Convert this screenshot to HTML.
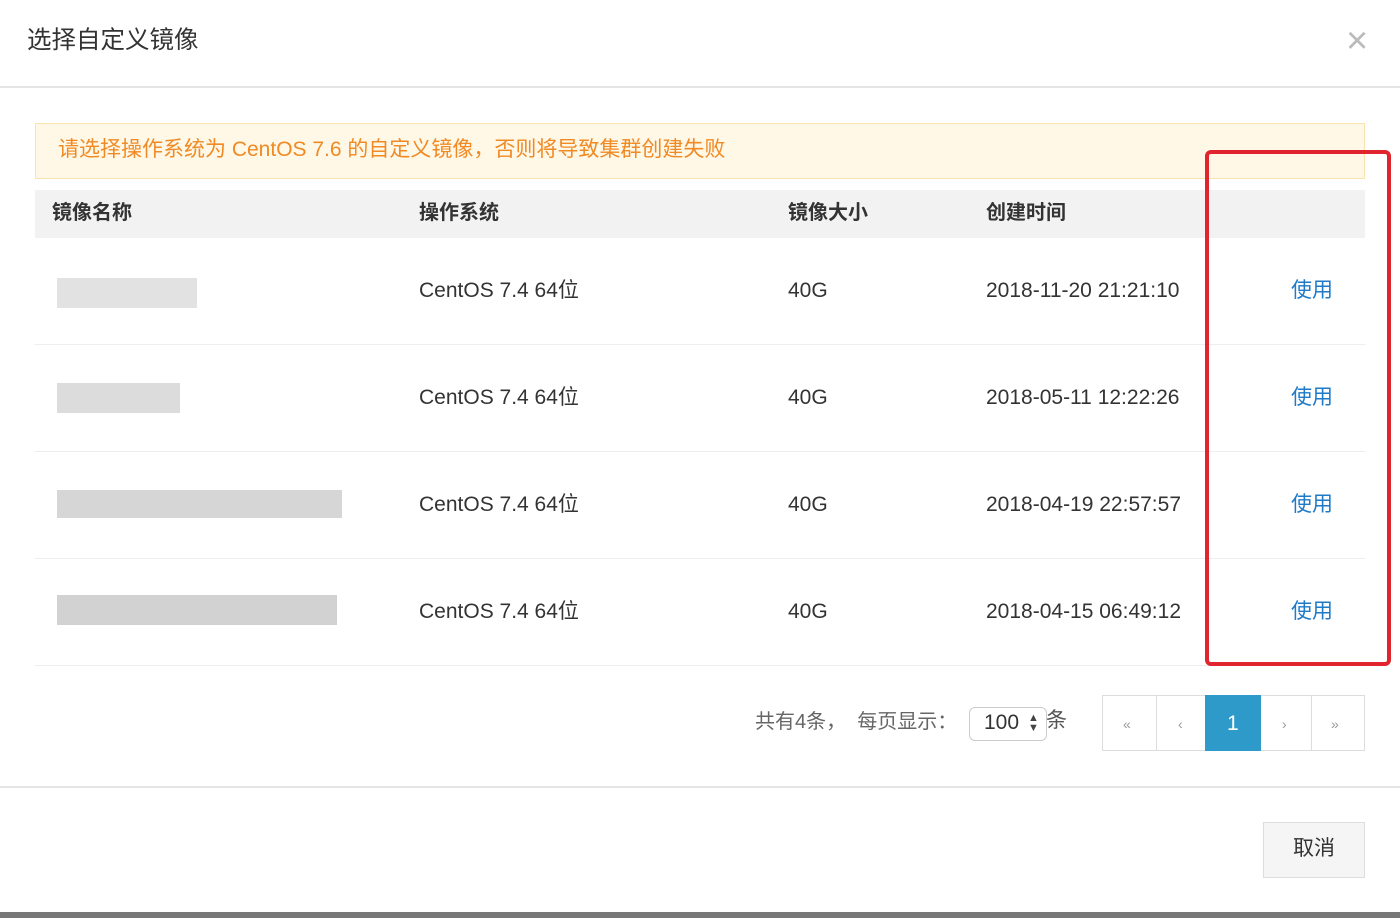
<!DOCTYPE html><html><head><meta charset="utf-8"><style>
body{margin:0;width:1400px;height:918px;background:#fff;position:relative;overflow:hidden;font-family:"Liberation Sans","Noto Sans CJK SC",sans-serif;color:#333}
.a{position:absolute}
.t{font-size:21px;white-space:nowrap;line-height:24px}
.blur{position:absolute;background:#ddd}
</style></head><body>
<div class="a" style="left:27px;top:27px;font-size:24.5px;line-height:28px;color:#333">选择自定义镜像</div>
<div class="a" style="left:1346px;top:22px;font-size:38px;color:#bbb;line-height:38px">×</div>
<div class="a" style="left:0;top:86px;width:1400px;height:2px;background:#e5e5e5"></div>
<div class="a" style="left:35px;top:123px;width:1328px;height:54px;background:#fff8e6;border:1px solid #fbe3b0"></div>
<div class="a t" style="left:58px;top:138px;color:#f08a24">请选择操作系统为 CentOS 7.6 的自定义镜像，否则将导致集群创建失败</div>
<div class="a" style="left:35px;top:190px;width:1330px;height:48px;background:#f2f2f2"></div>
<div class="a t" style="left:52px;top:201px;font-weight:bold;font-size:20px">镜像名称</div>
<div class="a t" style="left:419px;top:201px;font-weight:bold;font-size:20px">操作系统</div>
<div class="a t" style="left:788px;top:201px;font-weight:bold;font-size:20px">镜像大小</div>
<div class="a t" style="left:986px;top:201px;font-weight:bold;font-size:20px">创建时间</div>

<div class="a" style="left:35px;top:344px;width:1330px;height:1px;background:#eee"></div>
<div class="a" style="left:35px;top:451px;width:1330px;height:1px;background:#eee"></div>
<div class="a" style="left:35px;top:558px;width:1330px;height:1px;background:#eee"></div>
<div class="a" style="left:35px;top:665px;width:1330px;height:1px;background:#eee"></div>

<div class="blur" style="left:57px;top:278px;width:140px;height:30px;background:#e2e2e2"></div>
<div class="blur" style="left:57px;top:383px;width:123px;height:30px;background:#dcdcdc"></div>
<div class="blur" style="left:57px;top:490px;width:285px;height:28px;background:#d6d6d6"></div>
<div class="blur" style="left:57px;top:595px;width:280px;height:30px;background:#d2d2d2"></div>

<div class="a t" style="left:419px;top:279px">CentOS 7.4 64位</div>
<div class="a t" style="left:788px;top:279px">40G</div>
<div class="a t" style="left:986px;top:279px">2018-11-20 21:21:10</div>
<div class="a t" style="left:1291px;top:279px;color:#1f7ac7">使用</div>
<div class="a t" style="left:419px;top:386px">CentOS 7.4 64位</div>
<div class="a t" style="left:788px;top:386px">40G</div>
<div class="a t" style="left:986px;top:386px">2018-05-11 12:22:26</div>
<div class="a t" style="left:1291px;top:386px;color:#1f7ac7">使用</div>
<div class="a t" style="left:419px;top:493px">CentOS 7.4 64位</div>
<div class="a t" style="left:788px;top:493px">40G</div>
<div class="a t" style="left:986px;top:493px">2018-04-19 22:57:57</div>
<div class="a t" style="left:1291px;top:493px;color:#1f7ac7">使用</div>
<div class="a t" style="left:419px;top:600px">CentOS 7.4 64位</div>
<div class="a t" style="left:788px;top:600px">40G</div>
<div class="a t" style="left:986px;top:600px">2018-04-15 06:49:12</div>
<div class="a t" style="left:1291px;top:600px;color:#1f7ac7">使用</div>

<div class="a" style="left:1205px;top:150px;width:178px;height:508px;border:4px solid #e0252f;border-radius:6px"></div>

<div class="a t" style="left:755px;top:710px;color:#666;font-size:20px">共有4条，&nbsp;&nbsp;每页显示：</div>
<div class="a" style="left:969px;top:707px;width:76px;height:32px;border:1px solid #ccc;border-radius:6px"></div>
<div class="a t" style="left:984px;top:711px">100</div>
<div class="a" style="left:1028px;top:713px;font-size:11px;line-height:10px;color:#444">▲<br>▼</div>
<div class="a t" style="left:1046px;top:709px;color:#555">条</div>
<div class="a" style="left:1102px;top:695px;width:261px;height:54px;border:1px solid #ddd"></div>
<div class="a" style="left:1156px;top:695px;width:1px;height:56px;background:#ddd"></div>
<div class="a" style="left:1260px;top:695px;width:1px;height:56px;background:#ddd"></div>
<div class="a" style="left:1311px;top:695px;width:1px;height:56px;background:#ddd"></div>
<div class="a" style="left:1205px;top:695px;width:56px;height:56px;background:#2e9ac9"></div>
<div class="a" style="left:1123px;top:716px;color:#999;font-size:14px">«</div>
<div class="a" style="left:1178px;top:716px;color:#999;font-size:14px">‹</div>
<div class="a" style="left:1227px;top:712px;color:#fff;font-size:21px">1</div>
<div class="a" style="left:1282px;top:716px;color:#999;font-size:14px">›</div>
<div class="a" style="left:1331px;top:716px;color:#999;font-size:14px">»</div>

<div class="a" style="left:0;top:786px;width:1400px;height:2px;background:#e5e5e5"></div>
<div class="a" style="left:1263px;top:822px;width:100px;height:54px;background:#f5f5f5;border:1px solid #ddd"></div>
<div class="a t" style="left:1293px;top:837px">取消</div>
<div class="a" style="left:0;top:912px;width:1400px;height:6px;background:#777"></div>
</body></html>
